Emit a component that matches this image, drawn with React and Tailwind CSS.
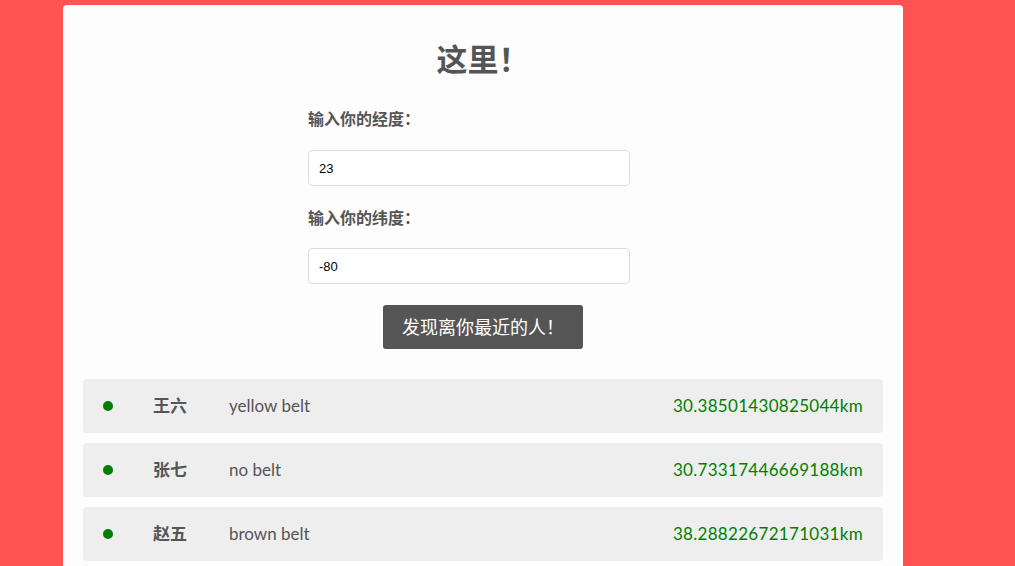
import React, { useState } from "react";

const ninjas = [
  { name: "王六", rank: "yellow belt", distance: "30.38501430825044km" },
  { name: "张七", rank: "no belt", distance: "30.73317446669188km" },
  { name: "赵五", rank: "brown belt", distance: "38.28822672171031km" },
];

const App = () => {
  const [lng, setLng] = useState("23");
  const [lat, setLat] = useState("-80");

  return (
    <div
      className="min-h-[566px] bg-[#ff5252] pt-[5px]"
      style={{ fontFamily: "Lato, 'Noto Sans CJK SC', sans-serif" }}
    >
      <div className="ml-[63px] w-[840px] min-h-[561px] bg-[#fdfdfd] rounded-t-[4px] px-5 pt-[28px] text-[#555]">
        <h1 className="text-center text-[31px] font-bold leading-[52px] mb-[22px]">这里！</h1>

        <form className="ml-[225px] w-[322px]" onSubmit={(e) => e.preventDefault()}>
          <label className="block text-[16px] font-bold leading-[24px] mb-[19px]">输入你的经度：</label>
          <input
            value={lng}
            onChange={(e) => setLng(e.target.value)}
            className="block w-full h-[36px] border border-[#ddd] rounded-[4px] bg-white px-[10px] text-[13px] text-black outline-none"
            style={{ fontFamily: "Arial, 'Liberation Sans', sans-serif" }}
          />
          <label className="block text-[16px] font-bold leading-[24px] mt-[20px] mb-[18px]">输入你的纬度：</label>
          <input
            value={lat}
            onChange={(e) => setLat(e.target.value)}
            className="block w-full h-[36px] border border-[#ddd] rounded-[4px] bg-white px-[10px] text-[13px] text-black outline-none"
            style={{ fontFamily: "Arial, 'Liberation Sans', sans-serif" }}
          />
        </form>

        <div className="flex justify-center mt-[21px]">
          <button className="w-[200px] h-[44px] bg-[#555] text-white text-[18px] rounded-[3px]">
            发现离你最近的人！
          </button>
        </div>

        <ul className="mt-[30px] flex flex-col gap-[10px]">
          {ninjas.map((n) => (
            <li
              key={n.name}
              className="h-[54px] bg-[#eee] rounded-[4px] flex items-center pl-[20px] pr-[20px] text-[17px]"
            >
              <span className="w-[10px] h-[10px] rounded-full bg-[#008000]" />
              <span className="ml-[40px] w-[76px] font-bold">{n.name}</span>
              <span>{n.rank}</span>
              <span className="ml-auto text-[#008000] tracking-[0.3px]">{n.distance}</span>
            </li>
          ))}
        </ul>
      </div>
    </div>
  );
};

export default App;
